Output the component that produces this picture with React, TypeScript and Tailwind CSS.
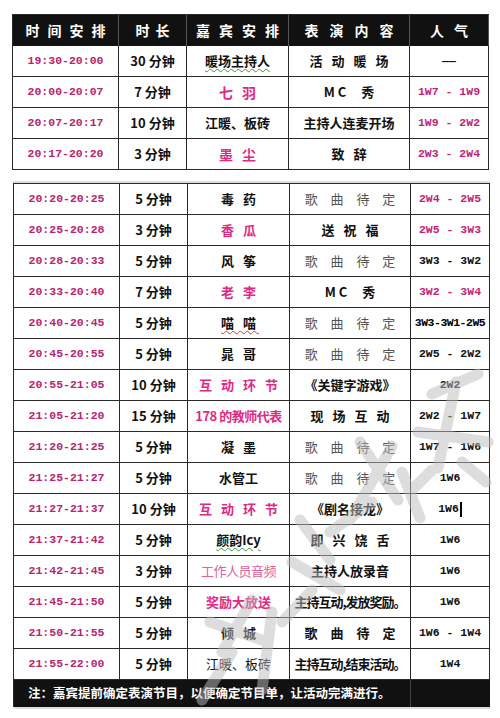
const cjk = "font-['Noto_Sans_CJK_SC',sans-serif]";
const mono = "font-['Liberation_Mono','DejaVu_Sans_Mono',monospace]";

type Row = {
  time: string;
  dur: string;
  guest: string;
  guestCls?: string;
  show: string;
  showCls?: string;
  pop: string;
  popCls?: string;
  cursor?: boolean;
};

const pink = "text-[#e02a82] tracking-[3px] pl-[3px]";
const wide = "text-[#111] tracking-[3px] pl-[3px]";
const tight = "text-[#111] tracking-normal";
const popPink = "text-[#c41f78]";
const song = "text-[#555] font-normal tracking-[5px] pl-[5px]";
const show = "text-[#111] tracking-[3px] pl-[3px]";
const showTight = "text-[#111] tracking-[-1px] text-[12px]";
const greenWave = " underline decoration-wavy decoration-[#3a9a3a] decoration-1 underline-offset-2";

const top: Row[] = [
  { time: "19:30-20:00", dur: "30 分钟", guest: "暖场主持人", guestCls: tight + " tracking-[1px]" + greenWave, show: "活 动 暖 场", pop: "——" },
  { time: "20:00-20:07", dur: "7 分钟", guest: "七 羽", guestCls: pink + " text-[14px]", show: "MC  秀", pop: "1W7 - 1W9", popCls: popPink },
  { time: "20:07-20:17", dur: "10 分钟", guest: "江暖、板砖", guestCls: tight, show: "主持人连麦开场", showCls: "text-[#111] tracking-normal", pop: "1W9 - 2W2", popCls: popPink },
  { time: "20:17-20:20", dur: "3 分钟", guest: "墨 尘", guestCls: pink + " text-[14px]", show: "致 辞", pop: "2W3 - 2W4", popCls: popPink },
];

const bottom: Row[] = [
  { time: "20:20-20:25", dur: "5 分钟", guest: "毒 药", show: "歌 曲 待 定", showCls: song, pop: "2W4 - 2W5", popCls: popPink },
  { time: "20:25-20:28", dur: "3 分钟", guest: "香 瓜", guestCls: pink, show: "送 祝 福", pop: "2W5 - 3W3", popCls: popPink },
  { time: "20:28-20:33", dur: "5 分钟", guest: "风 筝", show: "歌 曲 待 定", showCls: song, pop: "3W3 - 3W2" },
  { time: "20:33-20:40", dur: "7 分钟", guest: "老 李", guestCls: pink, show: "MC  秀", pop: "3W2 - 3W4", popCls: popPink },
  { time: "20:40-20:45", dur: "5 分钟", guest: "喵 喵", guestCls: wide + " underline decoration-wavy decoration-[#d33] decoration-1 underline-offset-2", show: "歌 曲 待 定", showCls: song, pop: "3W3-3W1-2W5", popCls: "text-[10.5px] tracking-[-0.5px]" },
  { time: "20:45-20:55", dur: "5 分钟", guest: "晁 哥", show: "歌 曲 待 定", showCls: song, pop: "2W5 - 2W2" },
  { time: "20:55-21:05", dur: "10 分钟", guest: "互 动 环 节", guestCls: pink, show: "《关键字游戏》", showCls: "text-[#111] tracking-normal", pop: "2W2" },
  { time: "21:05-21:20", dur: "15 分钟", guest: "178 的教师代表", guestCls: "text-[#e02a82] tracking-[-0.5px] text-[12.5px]", show: "现 场 互 动", pop: "2W2 - 1W7" },
  { time: "21:20-21:25", dur: "5 分钟", guest: "凝 墨", show: "歌 曲 待 定", showCls: song, pop: "1W7 - 1W6" },
  { time: "21:25-21:27", dur: "5 分钟", guest: "水管工", guestCls: tight, show: "歌 曲 待 定", showCls: song, pop: "1W6" },
  { time: "21:27-21:37", dur: "10 分钟", guest: "互 动 环 节", guestCls: pink, show: "《剧名接龙》", showCls: "text-[#111] tracking-normal", pop: "1W6", cursor: true },
  { time: "21:37-21:42", dur: "5 分钟", guest: "颜韵Icy", guestCls: tight + greenWave, show: "即 兴 饶 舌", pop: "1W6" },
  { time: "21:42-21:45", dur: "3 分钟", guest: "工作人员音频", guestCls: "text-[#e0609e] font-normal tracking-[-0.5px]", show: "主持人放录音", showCls: "text-[#111] tracking-normal", pop: "1W6" },
  { time: "21:45-21:50", dur: "5 分钟", guest: "奖励大放送", guestCls: "text-[#e02a82] tracking-normal", show: "主持互动,发放奖励。", showCls: showTight, pop: "1W6" },
  { time: "21:50-21:55", dur: "5 分钟", guest: "倾 城", show: "歌 曲 待 定", showCls: "text-[#111] tracking-[5px] pl-[5px]", pop: "1W6 - 1W4" },
  { time: "21:55-22:00", dur: "5 分钟", guest: "江暖、板砖", guestCls: "text-[#111] font-normal tracking-normal", show: "主持互动,结束活动。", showCls: showTight, pop: "1W4" },
];

const cols = "grid grid-cols-[106px_68px_102px_121px_79px]";
const cell = "flex h-[31px] items-center justify-center overflow-hidden whitespace-pre border-b border-r border-[#2a2a2a]";

function TableRow({ r }: { r: Row }) {
  return (
    <div className={cols}>
      <div className={`${cell} ${mono} text-[11.5px] font-bold text-[#b8246f]`}>{r.time}</div>
      <div className={`${cell} ${cjk} text-[13px] font-bold text-[#111]`}>{r.dur}</div>
      <div className={`${cell} ${cjk} text-[13px] font-bold ${r.guestCls ?? wide}`}>{r.guest}</div>
      <div className={`${cell} ${cjk} text-[13px] font-bold ${r.showCls ?? show}`}>{r.show}</div>
      <div className={`${cell} ${mono} text-[11.5px] font-bold ${r.popCls ?? "text-[#111]"}`}>
        {r.pop}
        {r.cursor && <span className="ml-[1px] inline-block h-[15px] w-[2px] bg-black" />}
      </div>
    </div>
  );
}

const headers = [
  { chars: ["时", "间", "安", "排"], gap: "gap-[8px]" },
  { chars: ["时", "长"], gap: "gap-[6px]" },
  { chars: ["嘉", "宾", "安", "排"], gap: "gap-[9px]" },
  { chars: ["表", "演", "内", "容"], gap: "gap-[11px]" },
  { chars: ["人", "气"], gap: "gap-[10px]" },
];

// brush-stroke watermark across the lower right of the sheet
const strokes = [
  "M432 394 L478 374",
  "M456 382 L438 468",
  "M418 432 L488 442",
  "M432 470 L410 492",
  "M462 462 L486 482",
  "M360 442 L398 500",
  "M392 446 L350 520",
  "M402 472 L420 518",
  "M372 502 L330 532",
  "M300 520 L330 560",
  "M292 562 L340 590",
  "M312 590 L282 622",
  "M252 600 L222 652",
  "M210 622 L262 640",
  "M232 652 L202 700",
  "M272 612 L262 690",
];

function Watermark() {
  return (
    <svg
      className="pointer-events-none absolute left-0 top-0 h-[718px] w-[500px] opacity-50"
      viewBox="0 0 500 718"
    >
      {strokes.map((d) => (
        <path key={d} d={d} stroke="#bdbdbd" strokeWidth={11} strokeLinecap="round" fill="none" />
      ))}
    </svg>
  );
}

export default function App() {
  return (
    <div className="relative h-[718px] w-[500px] overflow-hidden bg-white pt-[14px]">
      <div className="ml-[12px] w-[477px] border-l border-t border-[#2a2a2a]">
        <div className={`${cols} bg-[#111]`}>
          {headers.map((h, i) => (
            <div
              key={i}
              className={`flex h-[31px] items-center justify-center ${h.gap} border-r border-[#555] ${cjk} text-[14px] font-bold text-white`}
            >
              {h.chars.map((c, j) => (
                <span key={j}>{c}</span>
              ))}
            </div>
          ))}
        </div>
        {top.map((r) => (
          <TableRow key={r.time} r={r} />
        ))}
      </div>

      <div className="ml-[13px] mt-[13px] w-[477px] border-l border-t border-[#2a2a2a] shadow-[0_-2px_0_#ddd]">
        {bottom.map((r) => (
          <TableRow key={r.time} r={r} />
        ))}
        <div className={`${cols} h-[27px] bg-[#111] shadow-[0_2px_0_#ddd]`}>
          <div className={`col-span-4 flex items-center border-r border-[#444] pl-[14px] ${cjk} text-[12.5px] font-bold text-white`}>
            注：嘉宾提前确定表演节目，以便确定节目单，让活动完满进行。
          </div>
          <div />
        </div>
      </div>

      <Watermark />
    </div>
  );
}
